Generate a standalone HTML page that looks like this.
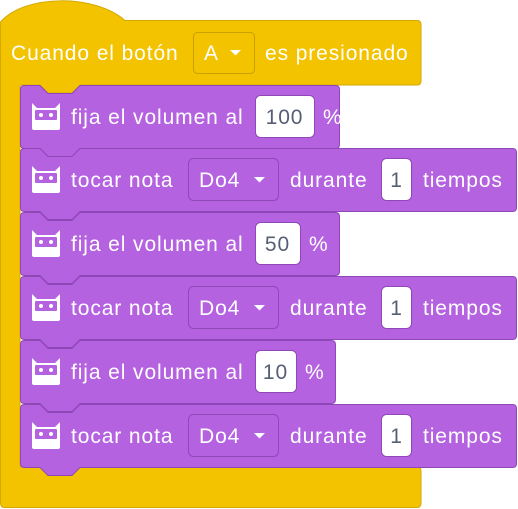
<!DOCTYPE html>
<html><head><meta charset="utf-8"><style>
html,body{margin:0;padding:0;background:#fff;width:518px;height:509px;overflow:hidden}
svg text{font-family:"Liberation Sans",sans-serif;font-size:21px;letter-spacing:0.9px}
</style></head><body>
<svg id="s" width="518" height="509" viewBox="0 0 518 509" xmlns="http://www.w3.org/2000/svg">
<path d="M0.5,22 C25,-6 95,-6 125,20.5 H417 Q421,20.5 421,24.5 V81 Q421,85 417,85 H80 L72,93 H48 L40,85 H20 V467 H40 L48,475 H72 L80,467 H417 Q421,467 421,471 V503 Q421,507.5 417,507.5 H4.5 Q0.5,507.5 0.5,503 Z" fill="#F3C300" stroke="#D4A900" stroke-width="1"/>
<text x="11" y="60" fill="#fff">Cuando el botón</text>
<rect x="193.5" y="32.5" width="61" height="41" rx="4" fill="#F3C300" stroke="#C9A000"/>
<text x="204" y="60" fill="#fff">A</text>
<path d="M230,50 h11 l-5.5,5.5z" fill="#fff"/>
<text x="265" y="60" fill="#fff">es presionado</text>
<g id="blocks"></g>
</svg>
<script>
var blocks=[[85,340,'vol','100',255,314],[148,517,'nota'],[212,340,'vol','50',255,300],[276,517,'nota'],[340,336,'vol','10',255,296],[404,517,'nota']];
var g=document.getElementById('blocks'),h='';
blocks.forEach(function(b){
var y=b[0]+0.5,x0=20.5,x1=b[1]-0.5,H=63,r=4;
h+='<path d="M'+x0+','+(y+r)+' Q'+x0+','+y+' '+(x0+r)+','+y+' H40 L48,'+(y+8)+' H72 L80,'+y+' H'+(x1-r)+' Q'+x1+','+y+' '+x1+','+(y+r)+' V'+(y+H-r)+' Q'+x1+','+(y+H)+' '+(x1-r)+','+(y+H)+' H80 L72,'+(y+H+8)+' H48 L40,'+(y+H)+' H'+(x0+r)+' Q'+x0+','+(y+H)+' '+x0+','+(y+H-r)+' Z" fill="#B562E0" stroke="#9048B8"/>';
var c=b[0]+32;
h+='<path d="M32,'+(c-14)+' l5,5 h18 l5,-5 v25 q0,2 -2,2 h-24 q-2,0 -2,-2 z" fill="#fff"/>';
h+='<rect x="35" y="'+(c-7)+'" width="22" height="10" rx="1" fill="#B562E0"/>';
h+='<circle cx="41" cy="'+(c-2)+'" r="2" fill="#fff"/><circle cx="51" cy="'+(c-2)+'" r="2" fill="#fff"/>';
var ty=c+7;
if(b[2]=='vol'){
h+='<text x="71" y="'+ty+'" fill="#fff">fija el volumen al</text>';
h+='<rect x="'+(b[4]+0.5)+'" y="'+(c-21.5)+'" width="'+(b[5]-b[4])+'" height="42" rx="5" fill="#fff" stroke="#9048B8"/>';
h+='<text x="'+((b[4]+b[5])/2)+'" y="'+ty+'" fill="#575E75" text-anchor="middle">'+b[3]+'</text>';
h+='<text x="'+(b[5]+9)+'" y="'+ty+'" fill="#fff">%</text>';
}else{
h+='<text x="71" y="'+ty+'" fill="#fff">tocar nota</text>';
h+='<rect x="188.5" y="'+(c-21.5)+'" width="90" height="42" rx="5" fill="#B562E0" stroke="#9048B8"/>';
h+='<text x="199" y="'+ty+'" fill="#fff">Do4</text>';
h+='<path d="M254,'+(c-3)+' h11 l-5.5,5.5z" fill="#fff"/>';
h+='<text x="290" y="'+ty+'" fill="#fff">durante</text>';
h+='<rect x="381.5" y="'+(c-21.5)+'" width="30" height="42" rx="5" fill="#fff" stroke="#9048B8"/>';
h+='<text x="396.5" y="'+ty+'" fill="#575E75" text-anchor="middle">1</text>';
h+='<text x="423" y="'+ty+'" fill="#fff">tiempos</text>';
}
});
g.innerHTML=h;
</script>
</body></html>
